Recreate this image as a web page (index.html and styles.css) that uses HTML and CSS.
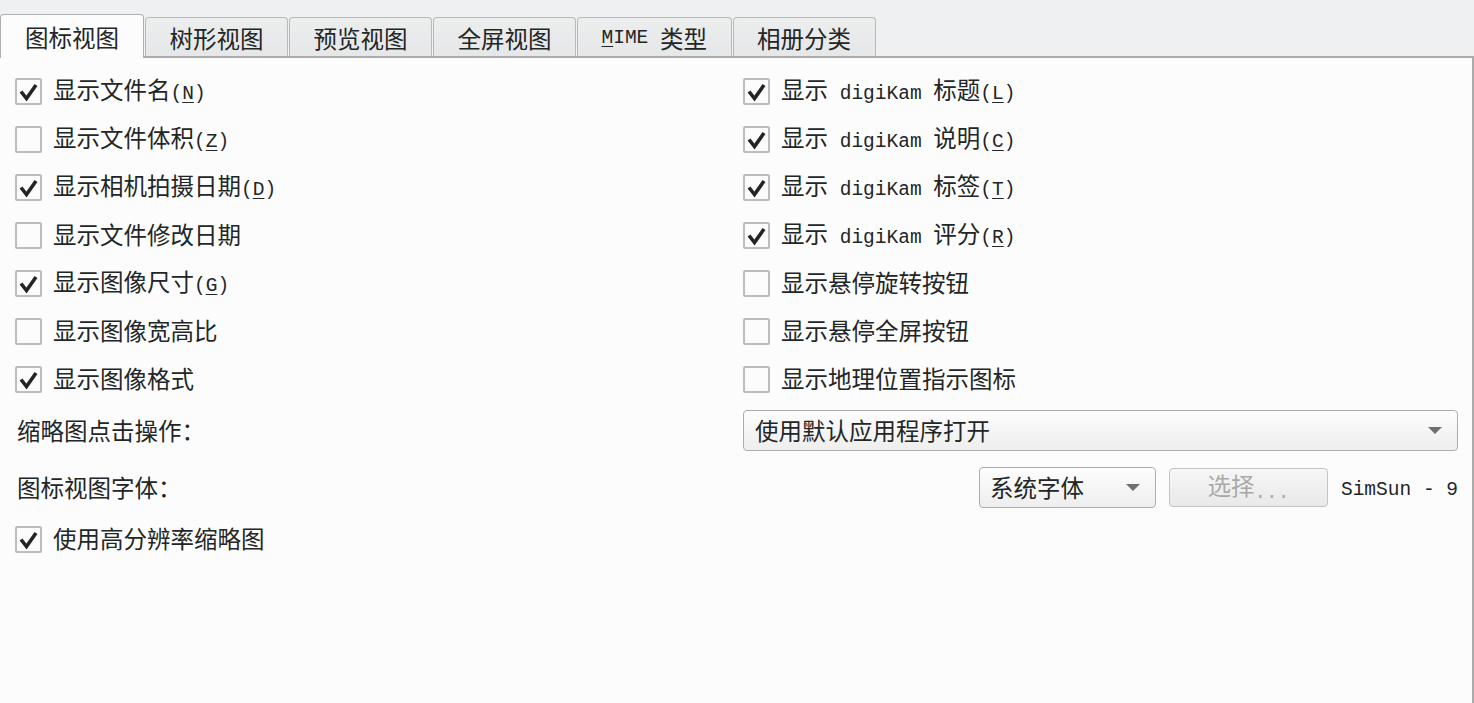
FILE: index.html
```html
<!DOCTYPE html>
<html lang="zh-CN">
<head>
<meta charset="utf-8">
<title>图标视图</title>
<link rel="stylesheet" href="styles.css">
</head>
<body>
<div class="tabbar">
  <div class="tab active">图标视图</div>
  <div class="tab">树形视图</div>
  <div class="tab">预览视图</div>
  <div class="tab">全屏视图</div>
  <div class="tab"><span class="m"><u>M</u>IME </span>类型</div>
  <div class="tab">相册分类</div>
</div>
<div class="panel">
  <div class="options">
    <label class="opt"><span class="cb on"><svg viewBox="0 0 23 23"><path d="M4 11.5 L9.5 18.5 L19 5"/></svg></span><span>显示文件名<span class="m">(<u>N</u>)</span></span></label>
    <label class="opt"><span class="cb on"><svg viewBox="0 0 23 23"><path d="M4 11.5 L9.5 18.5 L19 5"/></svg></span><span>显示<span class="m"> digiKam </span>标题<span class="m">(<u>L</u>)</span></span></label>
    <label class="opt"><span class="cb"></span><span>显示文件体积<span class="m">(<u>Z</u>)</span></span></label>
    <label class="opt"><span class="cb on"><svg viewBox="0 0 23 23"><path d="M4 11.5 L9.5 18.5 L19 5"/></svg></span><span>显示<span class="m"> digiKam </span>说明<span class="m">(<u>C</u>)</span></span></label>
    <label class="opt"><span class="cb on"><svg viewBox="0 0 23 23"><path d="M4 11.5 L9.5 18.5 L19 5"/></svg></span><span>显示相机拍摄日期<span class="m">(<u>D</u>)</span></span></label>
    <label class="opt"><span class="cb on"><svg viewBox="0 0 23 23"><path d="M4 11.5 L9.5 18.5 L19 5"/></svg></span><span>显示<span class="m"> digiKam </span>标签<span class="m">(<u>T</u>)</span></span></label>
    <label class="opt"><span class="cb"></span><span>显示文件修改日期</span></label>
    <label class="opt"><span class="cb on"><svg viewBox="0 0 23 23"><path d="M4 11.5 L9.5 18.5 L19 5"/></svg></span><span>显示<span class="m"> digiKam </span>评分<span class="m">(<u>R</u>)</span></span></label>
    <label class="opt"><span class="cb on"><svg viewBox="0 0 23 23"><path d="M4 11.5 L9.5 18.5 L19 5"/></svg></span><span>显示图像尺寸<span class="m">(<u>G</u>)</span></span></label>
    <label class="opt"><span class="cb"></span><span>显示悬停旋转按钮</span></label>
    <label class="opt"><span class="cb"></span><span>显示图像宽高比</span></label>
    <label class="opt"><span class="cb"></span><span>显示悬停全屏按钮</span></label>
    <label class="opt"><span class="cb on"><svg viewBox="0 0 23 23"><path d="M4 11.5 L9.5 18.5 L19 5"/></svg></span><span>显示图像格式</span></label>
    <label class="opt"><span class="cb"></span><span>显示地理位置指示图标</span></label>
  </div>
  <div class="row action-row">
    <div class="lbl">缩略图点击操作：</div>
    <div class="combo wide"><span>使用默认应用程序打开</span><span class="arrow"></span></div>
  </div>
  <div class="row font-row">
    <div class="lbl">图标视图字体：</div>
    <div class="font-controls">
      <div class="combo small"><span>系统字体</span><span class="arrow"></span></div>
      <div class="btn disabled"><span>选择<span class="m dots">...</span></span></div>
      <div class="fontname"><span class="m">SimSun - 9</span></div>
    </div>
  </div>
  <label class="opt last"><span class="cb on"><svg viewBox="0 0 23 23"><path d="M4 11.5 L9.5 18.5 L19 5"/></svg></span><span>使用高分辨率缩略图</span></label>
</div>
</body>
</html>
```
FILE: styles.css
```css
html, body {
  margin: 0;
  padding: 0;
  height: 100%;
  overflow: hidden;
}
body {
  background: #eff0f1;
  color: #232627;
  font-family: "Noto Sans CJK SC", "Noto Sans", sans-serif;
  font-size: 23.5px;
}
.m {
  font-family: "Liberation Mono", "DejaVu Sans Mono", monospace;
  font-size: 19.5px;
  white-space: pre;
}
u {
  text-decoration-thickness: 1px;
  text-underline-offset: 3px;
}
.tabbar {
  display: flex;
  align-items: flex-end;
  height: 56px;
  box-sizing: border-box;
  padding-top: 14px;
}
.tab {
  box-sizing: border-box;
  height: 39px;
  padding: 3px 23.5px 0;
  margin-right: 1px;
  display: flex;
  align-items: center;
  justify-content: center;
  border: 1px solid #b9b9b9;
  border-bottom: none;
  border-radius: 4px 4px 0 0;
  background: linear-gradient(#eceded, #e6e7e8);
  line-height: 1;
}
.tab.active {
  position: relative;
  z-index: 1;
  height: 44px;
  margin-bottom: -2px;
  padding: 2px 24px 0;
  background: #fcfcfc;
  border-color: #b0b0b0;
}
.panel {
  background: #fcfcfc;
  border-top: 2px solid #ababab;
  border-right: 2px solid #ababab;
  height: calc(100% - 56px);
  box-sizing: border-box;
  padding: 9px 14px 0 15px;
}
.options {
  display: grid;
  grid-template-columns: 728px 1fr;
  grid-auto-rows: 48px;
}
.opt {
  display: flex;
  align-items: center;
  gap: 11px;
  height: 48px;
  line-height: 1;
}
.cb {
  box-sizing: border-box;
  width: 27px;
  height: 27px;
  flex: none;
  border: 2px solid #bdbdbd;
  border-radius: 2px;
  background: #fcfcfc;
  display: block;
}
.cb svg {
  display: block;
  width: 23px;
  height: 23px;
}
.cb path {
  fill: none;
  stroke: #232627;
  stroke-width: 3.6;
  stroke-linejoin: miter;
}
.row {
  display: grid;
  grid-template-columns: 728px 1fr;
  align-items: center;
}
.lbl {
  padding-left: 2px;
  line-height: 1;
}
.action-row {
  margin-top: 7px;
  height: 41px;
}
.font-row {
  margin-top: 16px;
  height: 41px;
}
.combo {
  box-sizing: border-box;
  height: 41px;
  display: flex;
  align-items: center;
  justify-content: space-between;
  border: 1px solid #adadad;
  border-radius: 4px;
  background: linear-gradient(#fdfdfd, #eeeeee);
  line-height: 1;
}
.combo.wide {
  padding: 0 15px 0 11px;
}
.combo.small {
  width: 177px;
  padding: 0 15px 0 10px;
}
.arrow {
  width: 0;
  height: 0;
  border-left: 7px solid transparent;
  border-right: 7px solid transparent;
  border-top: 7px solid #707070;
}
.font-controls {
  display: flex;
  align-items: center;
  justify-content: flex-end;
  gap: 13px;
}
.btn {
  box-sizing: border-box;
  width: 159px;
  height: 39px;
  display: flex;
  align-items: center;
  justify-content: center;
  border: 1px solid #c4c4c4;
  border-radius: 4px;
  background: linear-gradient(#f6f6f6, #e9e9e9);
  line-height: 1;
}
.btn.disabled {
  color: #a9a9a9;
}
.dots {
  position: relative;
  top: 3px;
}
.fontname {
  line-height: 1;
}
.opt.last {
  margin-top: 7px;
}
```
